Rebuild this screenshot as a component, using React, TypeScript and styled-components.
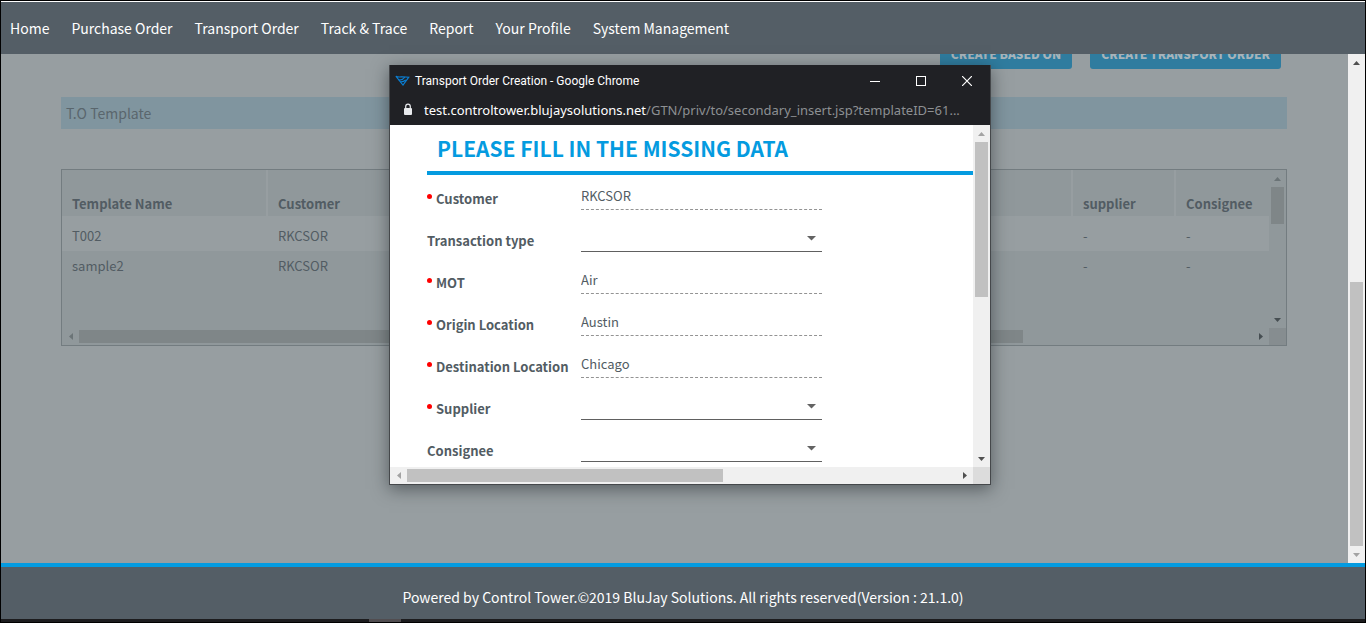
import React from "react";
import styled, { createGlobalStyle, css } from "styled-components";

const sans = `"Noto Sans CJK SC", "Noto Sans", sans-serif`;

const GlobalStyle = createGlobalStyle`
  *, *::before, *::after { box-sizing: border-box; }
  body { margin: 0; background: #000; font-family: ${sans}; font-size: 13px; line-height: 20px; color: #525c63; }
  button, input, select { font: inherit; color: inherit; }
`;

/* ---------- page frame ---------- */

const Page = styled.div`
  display: flex;
  flex-direction: column;
  min-height: 100vh;
  border: 1px solid #000;
`;

const TopBar = styled.header`
  border-top: 1px solid #fff;
  background: #545e66;
`;

const Nav = styled.nav`
  display: flex;
  align-items: center;
  gap: 22px;
  height: 52px;
  padding: 0 9px;
`;

const NavLink = styled.a`
  color: #fff;
  font-size: 14px;
  line-height: 24px;
  text-decoration: none;
  white-space: nowrap;
`;

const Main = styled.main`
  position: relative;
  display: flex;
  flex: 1;
  background: #979ea1;
`;

const Content = styled.div`
  flex: 1;
  min-width: 0;
  overflow: hidden;
  padding: 0 61px 0 60px;
`;

const Actions = styled.div`
  display: flex;
  justify-content: flex-end;
  gap: 18px;
  margin-top: -15px;
  padding-right: 6px;
`;

const ActionButton = styled.button`
  height: 30px;
  padding: 0 11px;
  border: 0;
  border-radius: 3px;
  background: #2f7c9f;
  color: #a9b3b8;
  font-size: 12px;
  font-weight: 900;
  line-height: 20px;
  text-transform: uppercase;
  white-space: nowrap;
`;

const SectionTitle = styled.h2`
  margin: 28px 0 40px;
  padding: 4px 5px;
  background: #80959f;
  color: #5a666d;
  font-size: 14px;
  font-weight: 400;
  line-height: 24px;
`;

const Footer = styled.footer`
  height: 56px;
  padding-top: 18px;
  border-top: 4px solid #049be0;
  background: #545e66;
  color: #fff;
  font-size: 14px;
  line-height: 24px;
  text-align: center;
`;

const Taskbar = styled.div`
  display: flex;
  height: 3px;
  padding-left: 27%;
  background: #1c1c1e;
`;

const TaskbarItem = styled.span`
  width: 32px;
  background: #514d50;
`;

/* ---------- scroll bars ---------- */

type Dir = "vertical" | "horizontal";

const Track = styled.div<{ $dir: Dir; $track: string }>`
  display: flex;
  flex: none;
  flex-direction: ${(p) => (p.$dir === "vertical" ? "column" : "row")};
  background: ${(p) => p.$track};
  ${(p) =>
    p.$dir === "vertical"
      ? css`
          width: 17px;
        `
      : css`
          height: 17px;
        `}
`;

const ArrowButton = styled.button`
  display: flex;
  flex: none;
  align-items: center;
  justify-content: center;
  width: 17px;
  height: 17px;
  padding: 0;
  border: 0;
  background: none;
`;

const Space = styled.div<{ $grow: number }>`
  flex: ${(p) => p.$grow} 1 0;
`;

const Thumb = styled.div<{ $grow: number; $dir: Dir; $color: string }>`
  flex: ${(p) => p.$grow} 1 0;
  margin: ${(p) => (p.$dir === "vertical" ? "0 2px" : "2px 0")};
  background: ${(p) => p.$color};
`;

const arrows = {
  up: "0,4 7,4 3.5,0",
  down: "0,0 7,0 3.5,4",
  left: "4,0 4,7 0,3.5",
  right: "0,0 0,7 4,3.5",
};

function Arrow({ to, fill }: { to: keyof typeof arrows; fill: string }) {
  const flat = to === "up" || to === "down";
  const w = flat ? 7 : 4;
  const h = flat ? 4 : 7;
  return (
    <svg width={w} height={h} viewBox={`0 0 ${w} ${h}`} aria-hidden="true">
      <polygon points={arrows[to]} fill={fill} />
    </svg>
  );
}

interface ScrollBarProps {
  dir: Dir;
  parts: [number, number, number];
  track?: string;
  thumb?: string;
  start?: string;
  end?: string;
}

function ScrollBar({
  dir,
  parts,
  track = "#f0f0f0",
  thumb = "#c1c1c1",
  start = "#a3a3a3",
  end = "#505050",
}: ScrollBarProps) {
  const vertical = dir === "vertical";
  return (
    <Track $dir={dir} $track={track}>
      <ArrowButton type="button" aria-label={vertical ? "Scroll up" : "Scroll left"}>
        <Arrow to={vertical ? "up" : "left"} fill={start} />
      </ArrowButton>
      <Space $grow={parts[0]} />
      <Thumb $grow={parts[1]} $dir={dir} $color={thumb} />
      <Space $grow={parts[2]} />
      <ArrowButton type="button" aria-label={vertical ? "Scroll down" : "Scroll right"}>
        <Arrow to={vertical ? "down" : "right"} fill={end} />
      </ArrowButton>
    </Track>
  );
}

const ScrollGrid = styled.div`
  display: grid;
  grid-template-columns: minmax(0, 1fr) 17px;
  grid-template-rows: minmax(0, 1fr) 17px;
`;

const Corner = styled.div<{ $color: string }>`
  background: ${(p) => p.$color};
`;

/* ---------- template table ---------- */

const TableFrame = styled(ScrollGrid)`
  height: 177px;
  border: 1px solid #737c80;
  background: #90989b;
`;

const Table = styled.table`
  align-self: start;
  width: 100%;
  border-collapse: separate;
  border-spacing: 0;
  table-layout: fixed;
`;

const Th = styled.th<{ $width?: number }>`
  width: ${(p) => (p.$width ? `${p.$width}px` : "auto")};
  height: 51px;
  padding: 0 10px 2px;
  border-bottom: 5px solid #979ea1;
  border-right: 2px solid #979ea1;
  font-size: 13px;
  line-height: 20px;
  text-align: left;
  vertical-align: bottom;

  &:last-child {
    border-right: 0;
  }
`;

const Tr = styled.tr<{ $light?: boolean }>`
  background: ${(p) => (p.$light ? "#979ea1" : "transparent")};
`;

const Td = styled.td`
  height: 30px;
  padding: 0 10px;
  font-size: 13px;
  line-height: 20px;
`;

/* ---------- popup window ---------- */

const Window = styled.section`
  position: absolute;
  top: 11px;
  left: 388px;
  width: 602px;
  border: 1px solid #45484b;
  border-top: 0;
  background: #fff;
  box-shadow: 0 4px 16px rgba(20, 26, 30, 0.5);
`;

const TitleBar = styled.div`
  display: flex;
  align-items: center;
  height: 31px;
  padding-left: 5px;
  background: #202125;
  color: #fff;
  font-family: Roboto, "Open Sans", sans-serif;
  font-size: 12px;
  line-height: 16px;
`;

const WindowTitle = styled.span`
  flex: 1;
  padding-left: 5px;
`;

const WindowButton = styled.button`
  display: flex;
  align-items: center;
  justify-content: center;
  width: 46px;
  height: 31px;
  padding: 0;
  border: 0;
  background: none;
`;

const AddressBar = styled.div`
  display: flex;
  align-items: center;
  gap: 11px;
  height: 29px;
  padding: 0 23px 2px 13px;
  background: #202125;
  color: #8d9093;
  font-family: "Noto Sans", "Open Sans", sans-serif;
  font-size: 13px;
  line-height: 20px;
`;

const Url = styled.span`
  overflow: hidden;
  text-overflow: ellipsis;
  white-space: nowrap;
`;

const Host = styled.span`
  color: #fff;
`;

const WindowBody = styled(ScrollGrid)`
  height: 359px;
`;

const Form = styled.form`
  overflow: hidden;
  padding-left: 37px;
`;

const FormTitle = styled.h1`
  margin: 0 0 7px;
  padding: 7px 10px;
  border-bottom: 4px solid #049be0;
  color: #049be0;
  font-size: 21px;
  font-weight: 700;
  line-height: 32px;
`;

const FieldRow = styled.div`
  display: grid;
  grid-template-columns: 154px 241px;
  height: 28px;
  margin-bottom: 14px;
`;

const Label = styled.label<{ $required?: boolean }>`
  display: flex;
  gap: 4px;
  padding-top: 7px;
  font-size: 13px;
  font-weight: 700;
  line-height: 20px;
  white-space: nowrap;

  ${(p) =>
    p.$required &&
    css`
      &::before {
        content: "";
        width: 5px;
        height: 5px;
        margin-top: 5px;
        border-radius: 50%;
        background: #f00;
      }
    `}
`;

const ReadOnlyInput = styled.input`
  min-width: 0;
  height: 28px;
  padding: 0;
  border: 0;
  border-bottom: 1px dashed #939393;
  border-radius: 0;
  background: none;
  outline: 0;
`;

const SelectWrap = styled.div`
  position: relative;
  display: grid;

  svg {
    position: absolute;
    top: 12px;
    right: 6px;
    pointer-events: none;
  }
`;

const Select = styled.select`
  height: 28px;
  padding: 0;
  border: 0;
  border-bottom: 1px solid #606060;
  border-radius: 0;
  background: none;
  appearance: none;
  outline: 0;
`;

const navItems = [
  "Home",
  "Purchase Order",
  "Transport Order",
  "Track & Trace",
  "Report",
  "Your Profile",
  "System Management",
];

const templates = [
  { name: "T002", customer: "RKCSOR", supplier: "-", consignee: "-" },
  { name: "sample2", customer: "RKCSOR", supplier: "-", consignee: "-" },
];

interface Field {
  id: string;
  label: string;
  required?: boolean;
  value?: string;
}

const fields: Field[] = [
  { id: "customer", label: "Customer", required: true, value: "RKCSOR" },
  { id: "transaction", label: "Transaction type" },
  { id: "mot", label: "MOT", required: true, value: "Air" },
  { id: "origin", label: "Origin Location", required: true, value: "Austin" },
  { id: "destination", label: "Destination Location", required: true, value: "Chicago" },
  { id: "supplier", label: "Supplier", required: true },
  { id: "consignee", label: "Consignee" },
];

function FormField({ id, label, required, value }: Field) {
  return (
    <FieldRow>
      <Label htmlFor={id} $required={required}>
        {label}
      </Label>
      {value ? (
        <ReadOnlyInput id={id} value={value} readOnly />
      ) : (
        <SelectWrap>
          <Select id={id} defaultValue="">
            <option value="" />
          </Select>
          <svg width="9" height="5" viewBox="0 0 9 5" aria-hidden="true">
            <path d="M0 0H9L4.5 4.5Z" fill="#636363" />
          </svg>
        </SelectWrap>
      )}
    </FieldRow>
  );
}

function BirdLogo() {
  return (
    <svg width="15" height="12" viewBox="0 0 15 12" fill="none" stroke="#0a7fd4" strokeWidth="1.1" aria-hidden="true">
      <path d="M0.8 1.2C3 2.4 5 2 7 1.8L13.8 2.2L8 10L0.8 1.2Z" />
      <path d="M3.6 4.8C6 5.4 8 4.6 9.8 2.2M5.4 7C8 6.8 9.4 6.2 10.8 5" />
    </svg>
  );
}

function LockIcon() {
  return (
    <svg width="10" height="13" viewBox="0 0 10 13" aria-hidden="true">
      <rect x="1" y="5" width="8" height="7" rx="1" fill="#e8eaed" />
      <path d="M2.7 5V3.4a2.3 2.3 0 0 1 4.6 0V5" fill="none" stroke="#e8eaed" strokeWidth="1.2" />
    </svg>
  );
}

function OrderWindow() {
  return (
    <Window role="dialog" aria-labelledby="window-title">
      <TitleBar>
        <BirdLogo />
        <WindowTitle id="window-title">Transport Order Creation - Google Chrome</WindowTitle>
        <WindowButton type="button" aria-label="Minimize">
          <svg width="10" height="10" viewBox="0 0 10 10" aria-hidden="true">
            <rect y="5" width="10" height="1" fill="#fff" />
          </svg>
        </WindowButton>
        <WindowButton type="button" aria-label="Maximize">
          <svg width="10" height="10" viewBox="0 0 10 10" aria-hidden="true">
            <rect x="0.5" y="0.5" width="9" height="9" fill="none" stroke="#fff" />
          </svg>
        </WindowButton>
        <WindowButton type="button" aria-label="Close">
          <svg width="10" height="10" viewBox="0 0 10 10" aria-hidden="true">
            <path d="M0 0L10 10M10 0L0 10" stroke="#fff" strokeWidth="1.2" />
          </svg>
        </WindowButton>
      </TitleBar>
      <AddressBar>
        <LockIcon />
        <Url>
          <Host>test.controltower.blujaysolutions.net</Host>
          /GTN/priv/to/secondary_insert.jsp?templateID=61...
        </Url>
      </AddressBar>
      <WindowBody>
        <Form>
          <FormTitle>PLEASE FILL IN THE MISSING DATA</FormTitle>
          {fields.map((f) => (
            <FormField key={f.id} {...f} />
          ))}
        </Form>
        <ScrollBar dir="vertical" parts={[0, 155, 153]} />
        <ScrollBar dir="horizontal" parts={[0, 316, 233]} />
        <Corner $color="#dcdcdc" />
      </WindowBody>
    </Window>
  );
}

export default function App() {
  const dimmed = { track: "#90989b", thumb: "#7f8688", start: "#6b7477", end: "#464e52" };
  return (
    <>
      <GlobalStyle />
      <Page>
        <TopBar>
          <Nav>
            {navItems.map((item) => (
              <NavLink key={item} href="#">
                {item}
              </NavLink>
            ))}
          </Nav>
        </TopBar>
        <Main>
          <Content>
            <Actions>
              <ActionButton type="button">Create based on</ActionButton>
              <ActionButton type="button">Create transport order</ActionButton>
            </Actions>
            <SectionTitle>T.O Template</SectionTitle>
            <TableFrame>
              <Table>
                <thead>
                  <tr>
                    <Th $width={206}>Template Name</Th>
                    <Th>Customer</Th>
                    <Th $width={103}>supplier</Th>
                    <Th $width={93}>Consignee</Th>
                  </tr>
                </thead>
                <tbody>
                  {templates.map((t, i) => (
                    <Tr key={t.name} $light={i % 2 === 0}>
                      <Td>{t.name}</Td>
                      <Td>{t.customer}</Td>
                      <Td>{t.supplier}</Td>
                      <Td>{t.consignee}</Td>
                    </Tr>
                  ))}
                </tbody>
              </Table>
              <ScrollBar dir="vertical" parts={[0, 37, 87]} {...dimmed} />
              <ScrollBar dir="horizontal" parts={[0, 944, 229]} {...dimmed} />
              <Corner $color="#868d90" />
            </TableFrame>
          </Content>
          <ScrollBar dir="vertical" parts={[211, 264, 0]} start="#505050" end="#a3a3a3" />
          <OrderWindow />
        </Main>
        <Footer>Powered by Control Tower.©2019 BluJay Solutions. All rights reserved(Version : 21.1.0)</Footer>
        <Taskbar>
          <TaskbarItem />
        </Taskbar>
      </Page>
    </>
  );
}
